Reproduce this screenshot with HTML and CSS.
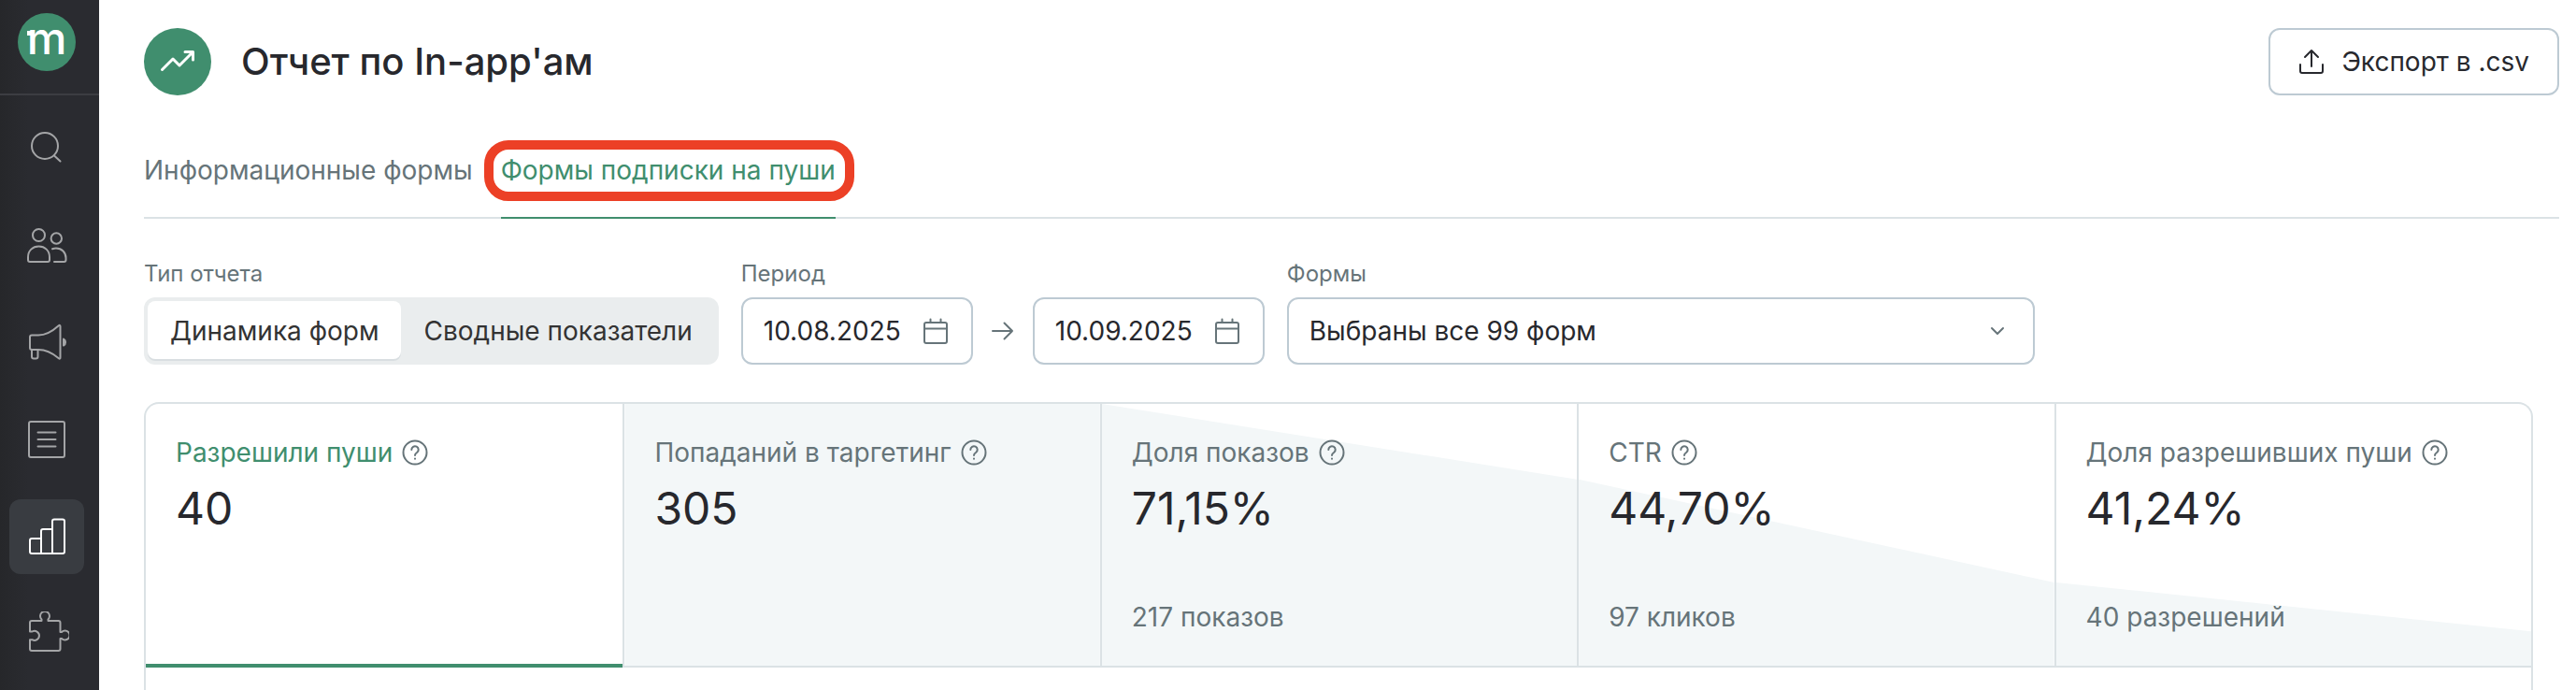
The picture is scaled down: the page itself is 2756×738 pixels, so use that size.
FILE: index.html
```html
<!DOCTYPE html>
<html lang="ru">
<head>
  <meta charset="UTF-8" />
  <meta name="viewport" content="width=device-width, initial-scale=1.0" />
  <title>Отчет по In-app'ам</title>

  <link rel="stylesheet" href="styles.css">
</head>
<body>

  <!-- Icons used more than once -->
  <svg class="sprite" aria-hidden="true">
    <symbol id="icon-calendar" viewBox="0 0 28 28">
      <rect x="2" y="5" width="24" height="22" rx="2" />
      <path d="M2 11.5H26M8.500 1.500V5M19.500 1.500V5" />
    </symbol>
    <symbol id="icon-help" viewBox="0 0 28 28">
      <circle cx="14" cy="14" r="12.500" />
      <path d="M10.300 11a3.700 3.700 0 1 1 5.800 3c-1.300.9-2.100 1.500-2.100 3" />
      <path d="M14 20.500v.2" />
    </symbol>
  </svg>

  <div class="app">

    <!-- Sidebar -->
    <aside class="sidebar">
      <a href="#" class="sidebar-logo"><span class="logo-mark">m</span></a>
      <nav class="sidebar-nav">
        <a href="#" class="sidebar-link" aria-label="Поиск">
          <svg viewBox="0 0 48 48">
            <circle cx="22" cy="22" r="14" />
            <path d="M32 32.500L38.500 38.500" />
          </svg>
        </a>
        <a href="#" class="sidebar-link" aria-label="Клиенты">
          <svg viewBox="0 0 48 48">
            <circle cx="15.500" cy="13.500" r="6.500" />
            <circle cx="34.300" cy="17" r="5.700" />
            <path d="M6 42H25a2 2 0 0 0 2-2V37C27 30 22 25.500 15.500 25.500S4 30 4 37V40a2 2 0 0 0 2 2Z" />
            <path d="M30 28.200q2-.7 4-.7C40 27.500 44.500 32 44.500 38V40a2 2 0 0 1-2 2H32" />
          </svg>
        </a>
        <a href="#" class="sidebar-link" aria-label="Кампании">
          <svg viewBox="0 0 48 48">
            <path d="M8 16.500H15C24 16.500 31 11.500 36.500 6.500Q38.500 5 38.500 7V40.500Q38.500 42.500 36.500 41C30 35.500 24 32 15 32H8a2 2 0 0 1-2-2V18.500a2 2 0 0 1 2-2Z" />
            <path d="M8 32V39.500a2 2 0 0 0 2 2H12.500a2 2 0 0 0 2-2V32" />
            <path class="filled" d="M42 20.500a4 4 0 0 1 0 7Z" />
          </svg>
        </a>
        <a href="#" class="sidebar-link" aria-label="Формы">
          <svg viewBox="0 0 48 48">
            <rect x="5" y="5" width="38" height="38" rx="2" />
            <path d="M14.500 16.500H33.500M14.500 24H33.500M14.500 31.500H33.500" />
          </svg>
        </a>
        <a href="#" class="sidebar-link active" aria-label="Отчеты">
          <svg viewBox="0 0 48 48">
            <path d="M18 42H8a2 2 0 0 1-2-2V28a2 2 0 0 1 2-2H18" />
            <path d="M18 42V18a2 2 0 0 1 2-2H30" />
            <path d="M18 42H41a2 2 0 0 0 2-2V7.500a2 2 0 0 0-2-2H32a2 2 0 0 0-2 2V42" />
          </svg>
        </a>
        <a href="#" class="sidebar-link" aria-label="Интеграции">
          <svg viewBox="0 0 48 48">
            <path d="M8 10H18.500V8.500A5 5 0 1 1 25.500 8.500V10H36.500a2 2 0 0 1 2 2V22H40A5 5 0 1 1 40 29H38.500V40a2 2 0 0 1-2 2H8a2 2 0 0 1-2-2V30.200H8.500A5 5 0 1 0 8.500 21.500H6V12a2 2 0 0 1 2-2Z" />
          </svg>
        </a>
      </nav>
    </aside>

    <main class="content">

      <!-- Page header -->
      <header class="page-header">
        <div class="page-icon">
          <svg viewBox="0 0 40 40">
            <path d="M3.500 28.500L15 17L22 24L36 10M28 9.500H36.500V18" />
          </svg>
        </div>
        <h1>Отчет по In-app'ам</h1>
        <button type="button" class="export-button">
          <svg viewBox="0 0 28 28">
            <path d="M14 19V2M7 9L14 2L21 9M2 17V24a2 2 0 0 0 2 2H24a2 2 0 0 0 2-2V17" />
          </svg>
          Экспорт в .csv
        </button>
      </header>

      <!-- Tabs -->
      <nav class="tabs">
        <a href="#" class="tab">Информационные формы</a>
        <a href="#" class="tab active highlighted">Формы подписки на пуши</a>
      </nav>

      <!-- Filters -->
      <form class="filters">
        <fieldset class="filter">
          <legend class="filter-label">Тип отчета</legend>
          <div class="segmented">
            <input type="radio" id="type-forms" name="report-type" checked />
            <label for="type-forms">Динамика форм</label>
            <input type="radio" id="type-summary" name="report-type" />
            <label for="type-summary">Сводные показатели</label>
          </div>
        </fieldset>

        <div class="filter">
          <label for="date-from" class="filter-label">Период</label>
          <div class="period">
            <div class="date-field">
              <input type="text" id="date-from" value="10.08.2025" />
              <svg><use href="#icon-calendar" /></svg>
            </div>
            <svg class="period-arrow" viewBox="0 0 24 24">
              <path d="M1 12H22M13.500 3.500L22 12L13.500 20.500" />
            </svg>
            <div class="date-field">
              <input type="text" id="date-to" value="10.09.2025" aria-label="Конец периода" />
              <svg><use href="#icon-calendar" /></svg>
            </div>
          </div>
        </div>

        <div class="filter filter-forms">
          <label for="forms" class="filter-label">Формы</label>
          <div class="select-field">
            <select id="forms">
              <option>Выбраны все 99 форм</option>
            </select>
            <svg viewBox="0 0 16 16"><path d="M2 5L8 11L14 5" /></svg>
          </div>
        </div>
      </form>

      <!-- Metrics -->
      <section class="panel">
        <div class="metrics">
          <article class="metric active">
            <h2>Разрешили пуши
              <button type="button" class="help" aria-label="Подсказка"><svg><use href="#icon-help" /></svg></button>
            </h2>
            <p class="metric-value">40</p>
          </article>
          <article class="metric" style="--from: 0%; --to: 0%">
            <h2>Попаданий в таргетинг
              <button type="button" class="help" aria-label="Подсказка"><svg><use href="#icon-help" /></svg></button>
            </h2>
            <p class="metric-value">305</p>
          </article>
          <article class="metric" style="--from: 0%; --to: 28.85%">
            <h2>Доля показов
              <button type="button" class="help" aria-label="Подсказка"><svg><use href="#icon-help" /></svg></button>
            </h2>
            <p class="metric-value">71,15%</p>
            <p class="metric-note">217 показов</p>
          </article>
          <article class="metric" style="--from: 28.85%; --to: 68.2%">
            <h2>CTR
              <button type="button" class="help" aria-label="Подсказка"><svg><use href="#icon-help" /></svg></button>
            </h2>
            <p class="metric-value">44,70%</p>
            <p class="metric-note">97 кликов</p>
          </article>
          <article class="metric" style="--from: 68.2%; --to: 86.89%">
            <h2>Доля разрешивших пуши
              <button type="button" class="help" aria-label="Подсказка"><svg><use href="#icon-help" /></svg></button>
            </h2>
            <p class="metric-value">41,24%</p>
            <p class="metric-note">40 разрешений</p>
          </article>
        </div>
      </section>

    </main>
  </div>

</body>
</html>
```
FILE: styles.css
```css
/* Basic Reset */
*,
*::before,
*::after {
  margin: 0;
  padding: 0;
  box-sizing: border-box;
}

body {
  font-family: Inter, "Liberation Sans", sans-serif;
  font-size: 28px;
  line-height: 40px;
  color: #27282d;
  background-color: #fff;
}

a {
  color: inherit;
  text-decoration: none;
}

button,
input,
select {
  font: inherit;
  color: inherit;
}

svg {
  display: block;
  flex-shrink: 0;
  fill: none;
  stroke: currentColor;
  stroke-width: 2;
  stroke-linecap: round;
  stroke-linejoin: round;
}

.sprite {
  position: absolute;
  width: 0;
  height: 0;
}

.app {
  display: flex;
  height: 100vh;
  overflow: hidden;
}

/* Sidebar */
.sidebar {
  flex-shrink: 0;
  width: 106px;
  background: linear-gradient(90deg, #26272a, #2a2b30 30px);
}

.sidebar-logo {
  display: flex;
  height: 102px;
  padding: 14px 0 0 19px;
  border-bottom: 2px solid #3c3d42;
}

.logo-mark {
  position: relative;
  width: 62px;
  height: 62px;
  border-radius: 50%;
  background-color: #408e6e;
  color: #fff;
  font-size: 48px;
  font-weight: 500;
  line-height: 54px;
  text-align: center;
}

/* Serif of the letter */
.logo-mark::before {
  content: "";
  position: absolute;
  top: 19px;
  left: 10px;
  width: 5px;
  height: 5px;
  background-color: #fff;
}

.sidebar-nav {
  display: flex;
  flex-direction: column;
  gap: 24px;
  padding: 16px 10px;
}

.sidebar-link {
  display: flex;
  align-items: center;
  justify-content: center;
  width: 80px;
  height: 80px;
  border-radius: 12px;
  color: #a4a5a7;
}

.sidebar-link svg {
  width: 48px;
  height: 48px;
}

.sidebar-link .filled {
  fill: currentColor;
}

.sidebar-link.active {
  background-color: #393c41;
  color: #fff;
}

/* Content */
.content {
  flex: 1;
  display: flex;
  flex-direction: column;
  min-width: 0;
  padding: 30px 18px 0 48px;
}

.page-header {
  display: flex;
  align-items: center;
}

.page-icon {
  display: flex;
  align-items: center;
  justify-content: center;
  width: 72px;
  height: 72px;
  margin-right: 32px;
  border-radius: 50%;
  background-color: #408e6e;
  color: #fff;
}

.page-icon svg {
  width: 40px;
  height: 40px;
  stroke-width: 3;
}

.page-header h1 {
  font-size: 40px;
  font-weight: 500;
  line-height: 48px;
}

.export-button {
  display: flex;
  align-items: center;
  gap: 18px;
  height: 72px;
  margin-left: auto;
  padding: 0 30px;
  border: 2px solid #bdcad3;
  border-radius: 12px;
  background-color: #fff;
  cursor: pointer;
}

.export-button svg {
  width: 28px;
  height: 28px;
}

/* Tabs */
.tabs {
  display: flex;
  gap: 30px;
  margin-top: 60px;
  box-shadow: inset 0 -2px 0 #dbe2e5;
  color: #667479;
}

.tab {
  position: relative;
  padding-bottom: 30px;
  border-bottom: 2px solid transparent;
}

.tab.active {
  border-color: #408e6e;
  color: #408e6e;
}

/* Marker round the tab */
.tab.highlighted::after {
  content: "";
  position: absolute;
  top: -12px;
  left: -18px;
  right: -20px;
  height: 65px;
  border: 10px solid #ec4026;
  border-radius: 26px;
}

/* Filters */
.filters {
  display: flex;
  gap: 24px;
  margin-top: 42px;
}

.filter {
  border: none;
}

.filter-forms {
  width: 800px;
}

.filter-label {
  display: block;
  margin-bottom: 8px;
  font-size: 24px;
  line-height: 34px;
  color: #667479;
}

.segmented {
  display: flex;
  height: 72px;
  padding: 4px;
  border-radius: 12px;
  background-color: #eaedee;
  color: #333;
}

.segmented input {
  position: absolute;
  opacity: 0;
}

.segmented label {
  display: flex;
  align-items: center;
  padding: 0 24px;
  border-radius: 8px;
  cursor: pointer;
}

.segmented input:checked + label {
  margin-bottom: 2px;
  padding-top: 2px;
  background-color: #fff;
  box-shadow: 0 2px 0 #d9dee1;
}

.period {
  display: flex;
  align-items: center;
  gap: 20px;
}

.date-field {
  display: flex;
  align-items: center;
  width: 248px;
  height: 72px;
  padding: 0 24px 0 22px;
  border: 2px solid #bdcad3;
  border-radius: 12px;
}

.date-field input {
  flex: 1;
  min-width: 0;
  border: none;
  outline: none;
  background: none;
}

.date-field svg {
  width: 28px;
  height: 28px;
  color: #667479;
}

.period-arrow {
  width: 24px;
  height: 24px;
  color: #667479;
}

.select-field {
  position: relative;
}

.select-field select {
  width: 100%;
  height: 72px;
  padding: 0 64px 0 22px;
  border: 2px solid #bdcad3;
  border-radius: 12px;
  background-color: #fff;
  appearance: none;
}

.select-field svg {
  position: absolute;
  top: 28px;
  right: 32px;
  width: 16px;
  height: 16px;
  color: #667479;
  pointer-events: none;
}

/* Metrics */
.panel {
  flex: 1;
  margin: 40px 28px 0 0;
  border: 2px solid #dbe2e5;
  border-bottom: none;
  border-radius: 16px 16px 0 0;
  overflow: hidden;
}

.metrics {
  display: grid;
  grid-template-columns: repeat(5, 1fr);
}

.metric {
  position: relative;
  z-index: 0;
  display: flex;
  flex-direction: column;
  min-height: 282px;
  padding: 32px;
  border-bottom: 2px solid #dbe2e5;
}

.metric + .metric {
  border-left: 2px solid #dbe2e5;
}

/* Funnel slope behind the numbers */
.metric + .metric::before {
  content: "";
  position: absolute;
  inset: 0;
  z-index: -1;
  background-color: #f3f7f8;
  clip-path: polygon(0 var(--from), 100% var(--to), 100% 100%, 0 100%);
}

.metric.active {
  border-bottom: 4px solid #408e6e;
}

.metric h2 {
  display: flex;
  align-items: center;
  gap: 10px;
  font-size: 28px;
  font-weight: 400;
  color: #667479;
}

.metric.active h2 {
  color: #408e6e;
}

.help {
  border: none;
  background: none;
  color: #667479;
  cursor: pointer;
}

.help svg {
  width: 28px;
  height: 28px;
}

.metric-value {
  margin-top: 10px;
  font-size: 48px;
  line-height: 60px;
}

.metric-note {
  margin-top: auto;
  color: #667479;
}
```
